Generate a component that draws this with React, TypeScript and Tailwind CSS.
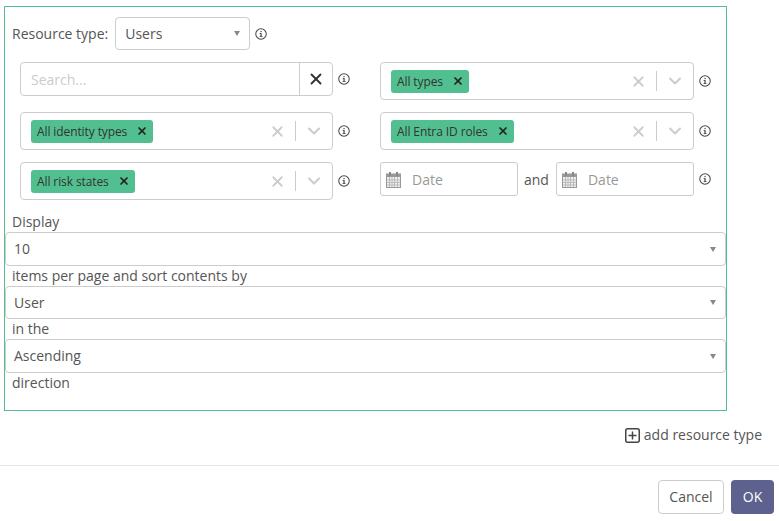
import { X, ChevronDown } from 'lucide-react';
import { ReactNode } from 'react';

function Info({ className = '' }: { className?: string }) {
  return (
    <svg width="12" height="12" viewBox="0 0 13 13" fill="none" className={`shrink-0 text-[#444] ${className}`}>
      <circle cx="6.5" cy="6.5" r="5.7" stroke="currentColor" strokeWidth="1.1" />
      <rect x="5.9" y="5.6" width="1.3" height="3.6" fill="currentColor" />
      <rect x="5" y="5.4" width="1.6" height="0.9" fill="currentColor" />
      <rect x="5" y="8.7" width="3.1" height="0.9" fill="currentColor" />
      <rect x="5.9" y="3.2" width="1.3" height="1.3" fill="currentColor" />
    </svg>
  );
}

function Caret() {
  return <span className="h-0 w-0 border-x-[3.5px] border-t-[5px] border-x-transparent border-t-[#888]" />;
}

function CalendarIcon() {
  return (
    <svg width="15" height="17" viewBox="0 0 15 17" fill="none" className="shrink-0">
      <rect x="0.5" y="3" width="14" height="13.5" fill="#eee" stroke="#999" />
      <rect x="0.5" y="3" width="14" height="3" fill="#999" />
      <rect x="3" y="1" width="2" height="4" fill="#888" />
      <rect x="10" y="1" width="2" height="4" fill="#888" />
      <path d="M3.5 6v10M6 6v10M8.5 6v10M11.5 6v10M1 9h13M1 11.5h13M1 14h13" stroke="#aaa" strokeWidth="0.7" />
    </svg>
  );
}

function TagSelect({ label }: { label: string }) {
  return (
    <div className="flex h-[38px] flex-1 items-center rounded border border-[#ccc] bg-white pl-[10px]">
      <span className="flex h-[23px] items-center rounded-[3px] bg-[#52bf90] pl-[6px] pr-[5px] text-[12px] tracking-[-0.1px] text-[#333]">
        <span className="pt-px">{label}</span>
        <X size={12} strokeWidth={3.5} className="ml-[9px] text-[#222]" />
      </span>
      <span className="flex-1" />
      <X size={17} strokeWidth={2.5} className="mr-[9px] text-[#ccc]" />
      <span className="h-[20px] w-px bg-[#ccc]" />
      <ChevronDown size={20} strokeWidth={2.5} className="mx-[8px] text-[#ccc]" />
    </div>
  );
}

function FieldRow({ children }: { children: ReactNode }) {
  return (
    <div className="flex items-center">
      {children}
      <Info className="ml-[5px]" />
    </div>
  );
}

function DateInput() {
  return (
    <div className="flex h-[34px] w-[138px] items-center rounded-[3px] border border-[#ccc] bg-white pl-[5px]">
      <CalendarIcon />
      <span className="ml-[11px] mt-px text-[#999]">Date</span>
    </div>
  );
}

function WideSelect({ value, height }: { value: string; height: string }) {
  return (
    <div className={`-ml-[7px] flex w-[721px] items-center justify-between rounded border border-[#ccc] bg-white pl-[8px] pr-[9px] ${height}`}>
      <span>{value}</span>
      <Caret />
    </div>
  );
}

export default function App() {
  return (
    <div className="h-[521px] w-[779px] overflow-hidden bg-white pt-[6px] font-['Open_Sans',sans-serif] text-[14px] leading-[20px] text-[#555]">
      <div className="ml-[4px] h-[405px] w-[723px] border border-[#52bf90] pl-[7px] pt-[10px]">
        <div className="flex items-center">
          <span>Resource type:</span>
          <div className="ml-[7px] flex h-[33px] w-[135px] items-center justify-between rounded border border-[#ccc] bg-white pl-[9px] pr-[9px]">
            <span>Users</span>
            <Caret />
          </div>
          <Info className="ml-[5px]" />
        </div>

        <div className="ml-[8px] mt-[12px] flex">
          <div className="flex w-[330px] flex-col">
            <FieldRow>
              <div className="flex h-[34px] flex-1 items-center rounded border border-[#ccc] bg-white">
                <span className="mt-px flex-1 pl-[10px] text-[#ccc]">Search...</span>
                <span className="flex h-full w-[33px] items-center justify-center border-l border-[#ccc] pr-px">
                  <X size={18} strokeWidth={2.5} className="text-[#333]" />
                </span>
              </div>
            </FieldRow>
            <div className="mt-[16px]">
              <FieldRow>
                <TagSelect label="All identity types" />
              </FieldRow>
            </div>
            <div className="mt-[12px]">
              <FieldRow>
                <TagSelect label="All risk states" />
              </FieldRow>
            </div>
          </div>

          <div className="ml-[30px] flex w-[331px] flex-col gap-[12px]">
            <FieldRow>
              <TagSelect label="All types" />
            </FieldRow>
            <FieldRow>
              <TagSelect label="All Entra ID roles" />
            </FieldRow>
            <div className="flex items-center">
              <DateInput />
              <span className="ml-[6px] mr-[7px] mt-[2px]">and</span>
              <DateInput />
              <Info className="ml-[5px] -mt-[1px]" />
            </div>
          </div>
        </div>

        <div className="mt-[12px]">Display</div>
        <WideSelect value="10" height="h-[34px]" />
        <div>items per page and sort contents by</div>
        <WideSelect value="User" height="h-[33px]" />
        <div>in the</div>
        <WideSelect value="Ascending" height="h-[34px]" />
        <div>direction</div>
      </div>

      <div className="mt-[14px] flex h-[20px] items-center justify-end pr-[17px]">
        <svg width="15" height="15" viewBox="0 0 15 15" fill="none" className="mr-[4px] text-[#444]">
          <rect x="0.75" y="0.75" width="13.5" height="13.5" rx="2" stroke="currentColor" strokeWidth="1.5" />
          <path d="M7.5 3.5v8M3.5 7.5h8" stroke="currentColor" strokeWidth="1.5" />
        </svg>
        <span>add resource type</span>
      </div>

      <div className="mt-[20px] flex justify-end gap-[7px] border-t border-[#e5e5e5] pr-[5px] pt-[14px]">
        <button type="button" className="h-[34px] w-[66px] rounded border border-[#ccc] bg-white text-[#555]">
          Cancel
        </button>
        <button type="button" className="h-[34px] w-[43px] rounded bg-[#5c628d] text-white">
          OK
        </button>
      </div>
    </div>
  );
}
